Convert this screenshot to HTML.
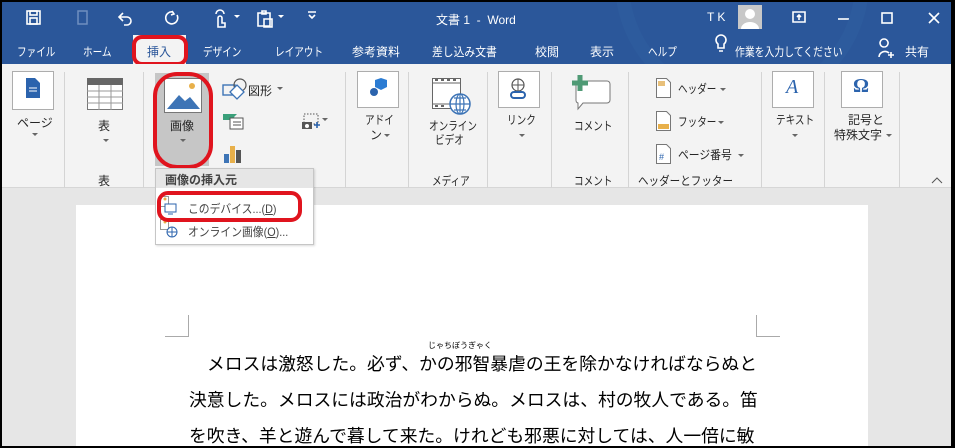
<!DOCTYPE html>
<html><head><meta charset="utf-8">
<style>
*{margin:0;padding:0;box-sizing:border-box}
body{width:955px;height:448px;overflow:hidden;background:#000;font-family:"Liberation Sans","Noto Sans CJK JP",sans-serif;position:relative}
.a{position:absolute;white-space:nowrap}
#frame{position:absolute;left:2px;top:2px;width:949px;height:444px;background:#e6e6e6;overflow:hidden}
.t{color:#fff;font-size:12px}
.k{transform:scaleX(.8);transform-origin:0 0}
.r{color:#262626;font-size:12px}
.sep{position:absolute;top:70px;width:1px;height:116px;background:#d4d4d4}
.box{position:absolute;background:#fff;border:1px solid #adadad}
.arr{position:absolute;width:0;height:0;border-left:3px solid transparent;border-right:3px solid transparent;border-top:3px solid #666}
.jp{font-size:17.8px;color:#000;letter-spacing:0}
</style></head><body>
<div id="frame">
<div class="a" style="left:0;top:0;width:949px;height:62px;background:#2b579a"></div>
<svg class="a" style="left:0;top:0" width="949" height="62">
 <g fill="none" stroke="#fff" stroke-width="1.6">
  <rect x="25" y="9" width="13" height="13"/><rect x="28" y="9" width="7" height="4"/><rect x="28" y="16" width="7" height="6"/>
  <path d="M121 11 l-4 4 4 4 M117 15 h8 a4 4 0 0 1 0 8 h-3"/>
  <path d="M171 10 a6 6 0 1 0 4 3 M170 9 l2 3 -3 1"/>
  <path d="M216 24 v-8 a2 2 0 0 1 4 0 v5 h3 v4 h-7z M214 12 a4 4 0 0 1 8 0"/>
  <path d="M256 11 h12 v13 h-12z M260 9 h4 v3 h-4z M262 17 h8 v8 h-8z"/>
  <path d="M306 10 h8 M307 13 l3 3 3 -3"/>
  <path d="M791 10 h12 v10 h-12z M797 18 v-5 M795 15 l2 -2 2 2"/>
  <path d="M836 17 h11"/><rect x="880" y="11" width="10" height="10"/>
  <path d="M927 11 l10 10 M937 11 l-10 10"/>
  <path d="M716 42 a5 5 0 1 1 6 0 v4 h-6z M717 49 h4"/>
  <path d="M882 45 a4 4 0 1 1 .1 0 M877 55 a6 6 0 0 1 10 -4 M889 50 v6 M886 53 h6"/>
 </g>
 <g fill="#fff"><path d="M232 13 l3 3 3 -3z M276 13 l3 3 3 -3z"/></g>
 <rect x="76" y="9" width="9" height="13" fill="none" stroke="#6f8fc0" stroke-width="1.5"/>
 <rect x="736" y="3" width="24" height="24" fill="#c8c8c8"/>
 <circle cx="748" cy="12" r="5" fill="#fff"/><path d="M739 27 a9 7 0 0 1 18 0z" fill="#fff"/>
 <circle cx="740" cy="-20" r="120" fill="none" stroke="#30609f" stroke-width="14" opacity=".5"/>
</svg>
<div class="a t" style="left:434px;top:9px">文書 1 &nbsp;- &nbsp;Word</div>
<div class="a t" style="left:705px;top:8px;letter-spacing:3px">TK</div>
<div class="a" style="left:131px;top:33px;width:53px;height:29px;background:#f3f3f3"></div>
<div class="a t k" style="left:15px;top:41px">ファイル</div>
<div class="a t k" style="left:81px;top:41px">ホーム</div>
<div class="a" style="left:145px;top:41px;font-size:12px;color:#2b579a">挿入</div>
<div class="a t k" style="left:201px;top:41px">デザイン</div>
<div class="a t k" style="left:273px;top:41px">レイアウト</div>
<div class="a t" style="left:350px;top:41px">参考資料</div>
<div class="a t k" style="left:430px;top:41px;transform:scaleX(.9)">差し込み文書</div>
<div class="a t" style="left:533px;top:41px">校閲</div>
<div class="a t" style="left:588px;top:41px">表示</div>
<div class="a t k" style="left:646px;top:41px">ヘルプ</div>
<div class="a t k" style="left:733px;top:41px;transform:scaleX(.82)">作業を入力してください</div>
<div class="a t" style="left:903px;top:41px">共有</div>
<div class="a" style="left:130px;top:33px;width:56px;height:31px;border:4px solid #e0141e;border-radius:10px"></div>
<div class="a" style="left:0;top:62px;width:949px;height:124px;background:#f3f3f3;border-bottom:1px solid #d6d6d6"></div>
<div class="sep" style="left:62px"></div><div class="sep" style="left:141px"></div><div class="sep" style="left:343px"></div><div class="sep" style="left:406px"></div><div class="sep" style="left:485px"></div><div class="sep" style="left:549px"></div><div class="sep" style="left:626px"></div><div class="sep" style="left:759px"></div><div class="sep" style="left:822px"></div><div class="sep" style="left:897px"></div>
<div class="box" style="left:10px;top:69px;width:42px;height:39px"></div>
<svg class="a" style="left:24px;top:76px" width="14" height="20"><path d="M0 0 h9 l5 5 v15 h-14z" fill="#2b63ad"/><path d="M3 10 h8 M3 13 h8" stroke="#fff"/></svg>
<div class="a r" style="left:15px;top:112px">ページ</div><div class="arr" style="left:30px;top:131px"></div>
<svg class="a" style="left:85px;top:76px" width="36" height="32"><rect x=".5" y=".5" width="35" height="31" fill="#fff" stroke="#777"/><rect x="0" y="0" width="36" height="7" fill="#666"/><path d="M12 7v25M24 7v25M0 13h36M0 19h36M0 25h36" stroke="#999"/></svg>
<div class="a r" style="left:96px;top:115px">表</div><div class="arr" style="left:101px;top:137px"></div>
<div class="a r" style="left:96px;top:170px">表</div>
<div class="a" style="left:153px;top:71px;width:54px;height:93px;background:#c6c6c6"></div>
<svg class="a" style="left:162px;top:76px" width="38" height="35"><rect x=".5" y=".5" width="37" height="34" fill="#fff" stroke="#777"/><circle cx="28" cy="8" r="3" fill="#e8b04a"/><path d="M3 31 l12 -14 6 6 5 -4 10 12z" fill="#3d74b6"/></svg>
<div class="a r" style="left:168px;top:115px">画像</div><div class="arr" style="left:178px;top:137px"></div>
<div class="a" style="left:151px;top:70px;width:60px;height:97px;border:4px solid #e0141e;border-radius:24px"></div>
<svg class="a" style="left:220px;top:76px" width="110" height="86">
 <rect x="1" y="7" width="12" height="10" fill="none" stroke="#3d74b6" stroke-width="1.4"/><circle cx="18" cy="7" r="6" fill="none" stroke="#555" stroke-width="1.2"/><path d="M8 14 l7 7 7 -7 -7 -7z" fill="#fff" stroke="#3d74b6" stroke-width="1.3"/>
 <path d="M1 36 h14 l-3 3 3 3 h-14z" fill="#3aa07a"/><rect x="8" y="40" width="13" height="11" fill="#fff" stroke="#555"/><path d="M11 44h8M11 47h8" stroke="#555"/>
 <rect x="2" y="76" width="5" height="9" fill="#3d74b6"/><rect x="8" y="68" width="5" height="17" fill="#e8b04a"/><rect x="14" y="72" width="5" height="13" fill="#555"/>
 <rect x="82" y="36" width="14" height="10" fill="none" stroke="#555" stroke-dasharray="1.5 1.5"/><rect x="80" y="44" width="10" height="7" fill="#555"/><circle cx="85" cy="48" r="2" fill="#fff"/><path d="M95 44 v6 M92 47 h6" stroke="#2b63ad" stroke-width="1.6"/>
 <path d="M100 40 l3 3 3 -3z M55 9 l3 3 3 -3z" fill="#666"/>
</svg>
<div class="a r" style="left:246px;top:80px">図形</div>
<div class="box" style="left:355px;top:69px;width:42px;height:37px"></div>
<svg class="a" style="left:367px;top:76px" width="20" height="20"><path d="M6 2 l6 -2 6 2 v7 l-6 3 -6 -3z" fill="#2b7cd3"/><circle cx="5" cy="14" r="4" fill="#2b63ad"/></svg>
<div class="a r k" style="left:363px;top:109px">アドイ</div><div class="a r" style="left:368px;top:124px">ン</div><div class="arr" style="left:382px;top:132px"></div>
<svg class="a" style="left:430px;top:76px" width="40" height="38"><rect x=".5" y=".5" width="28" height="30" fill="#fff" stroke="#666"/><path d="M0 5h29M0 26h29" stroke="#666"/><path d="M3 2h3M9 2h3M15 2h3M21 2h3M3 28h3M9 28h3" stroke="#666" stroke-width="2"/><circle cx="28" cy="26" r="10" fill="#fff" stroke="#3d74b6" stroke-width="1.5"/><path d="M18 26h20M28 16v20M22 20h12M22 32h12" stroke="#3d74b6" stroke-width="1.2"/><ellipse cx="28" cy="26" rx="4" ry="10" fill="none" stroke="#3d74b6" stroke-width="1.2"/></svg>
<div class="a r k" style="left:427px;top:115px">オンライン</div><div class="a r k" style="left:433px;top:129px">ビデオ</div>
<div class="a r k" style="left:430px;top:170px">メディア</div>
<div class="box" style="left:496px;top:69px;width:42px;height:37px"></div>
<svg class="a" style="left:508px;top:76px" width="20" height="22"><circle cx="8" cy="7" r="6" fill="none" stroke="#555" stroke-width="1.2"/><path d="M2 7h12M8 1v12" stroke="#555"/><path d="M4 14 h8 a3 3 0 0 1 0 6 h-8 a3 3 0 0 1 0 -6z" fill="none" stroke="#2b63ad" stroke-width="2"/></svg>
<div class="a r k" style="left:505px;top:109px">リンク</div><div class="arr" style="left:517px;top:132px"></div>
<svg class="a" style="left:568px;top:73px" width="42" height="40"><path d="M6 6 h31 a3 3 0 0 1 3 3 v16 a3 3 0 0 1 -3 3 h-24 l-5 6 v-6 a3 3 0 0 1 -2 -3z" fill="#fff" stroke="#777"/><path d="M10 0v16M2 8h16" stroke="#4f9a75" stroke-width="5"/></svg>
<div class="a r k" style="left:572px;top:115px">コメント</div>
<div class="a r k" style="left:572px;top:170px">コメント</div>
<svg class="a" style="left:654px;top:76px" width="16" height="86"><path d="M.5 .5h10l4 4v15h-14z" fill="#fff" stroke="#777"/><rect x="2" y="3" width="7" height="5" fill="#e8c07a"/><path d="M.5 33.5h10l4 4v15h-14z" fill="#fff" stroke="#777"/><rect x="2" y="46" width="11" height="5" fill="#e8b04a"/><path d="M.5 66.5h10l4 4v15h-14z" fill="#fff" stroke="#777"/><text x="3" y="82" font-size="9" fill="#2b63ad" font-family="Liberation Sans">#</text></svg>
<div class="a r k" style="left:676px;top:78px">ヘッダー</div><div class="arr" style="left:718px;top:86px"></div>
<div class="a r k" style="left:676px;top:111px">フッター</div><div class="arr" style="left:716px;top:119px"></div>
<div class="a r k" style="left:676px;top:144px;transform:scaleX(.9)">ページ番号</div><div class="arr" style="left:736px;top:152px"></div>
<div class="a r k" style="left:636px;top:170px;transform:scaleX(.88)">ヘッダーとフッター</div>
<div class="box" style="left:770px;top:69px;width:42px;height:37px"></div>
<div class="a" style="left:784px;top:74px;font-size:20px;color:#2b63ad;font-style:italic;font-family:'Liberation Serif',serif">A</div>
<div class="a r k" style="left:774px;top:109px">テキスト</div><div class="arr" style="left:790px;top:132px"></div>
<div class="box" style="left:839px;top:69px;width:42px;height:37px"></div>
<div class="a" style="left:851px;top:73px;font-size:20px;font-weight:bold;color:#2b63ad;font-family:'Liberation Serif',serif">Ω</div>
<div class="a r" style="left:846px;top:109px">記号と</div><div class="a r" style="left:832px;top:124px">特殊文字</div><div class="arr" style="left:884px;top:132px"></div>
<svg class="a" style="left:929px;top:175px" width="12" height="8"><path d="M1 6l5-5 5 5" fill="none" stroke="#555"/></svg>
<div class="a" style="left:74px;top:203px;width:792px;height:250px;background:#fff"></div>
<div class="a" style="left:163px;top:313px;width:24px;height:22px;border-right:1px solid #aaa;border-bottom:1px solid #aaa"></div>
<div class="a" style="left:754px;top:313px;width:24px;height:22px;border-left:1px solid #aaa;border-bottom:1px solid #aaa"></div>
<div class="a" style="left:426px;top:338px;font-size:8px;color:#000">じゃちぼうぎゃく</div>
<div class="a jp" style="left:205px;top:348px">メロスは激怒した。必ず、かの邪智暴虐の王を除かなければならぬと</div>
<div class="a jp" style="left:187px;top:384px">決意した。メロスには政治がわからぬ。メロスは、村の牧人である。笛</div>
<div class="a jp" style="left:187px;top:420px">を吹き、羊と遊んで暮して来た。けれども邪悪に対しては、人一倍に敏</div>
<div class="a" style="left:153px;top:166px;width:159px;height:77px;background:#fff;border:1px solid #c6c6c6;box-shadow:1px 1px 2px rgba(0,0,0,.15)"></div>
<div class="a" style="left:154px;top:167px;width:157px;height:19px;background:#e6e6e6"></div>
<div class="a" style="left:163px;top:169px;font-size:12px;color:#444;font-weight:bold">画像の挿入元</div>
<svg class="a" style="left:158px;top:194px" width="18" height="44"><rect x=".5" y=".5" width="8" height="10" fill="#fff" stroke="#999"/><circle cx="5" cy="3" r="1.5" fill="#e8b04a"/><rect x="5" y="8" width="11" height="8" fill="#fff" stroke="#2b63ad"/><path d="M8 18h5" stroke="#2b63ad"/><rect x=".5" y="23.5" width="8" height="10" fill="#fff" stroke="#999"/><circle cx="5" cy="26" r="1.5" fill="#e8b04a"/><circle cx="12" cy="36" r="5" fill="#fff" stroke="#2b63ad"/><path d="M7 36h10M12 31v10" stroke="#2b63ad"/></svg>
<div class="a k" style="left:186px;top:198px;font-size:12px;color:#444;transform:scaleX(.9)">このデバイス...(<u>D</u>)</div>
<div class="a k" style="left:186px;top:221px;font-size:12px;color:#444;transform:scaleX(.9)">オンライン画像(<u>O</u>)...</div>
<div class="a" style="left:155px;top:189px;width:145px;height:31px;border:4px solid #e0141e;border-radius:11px"></div>
</div>
</body></html>
